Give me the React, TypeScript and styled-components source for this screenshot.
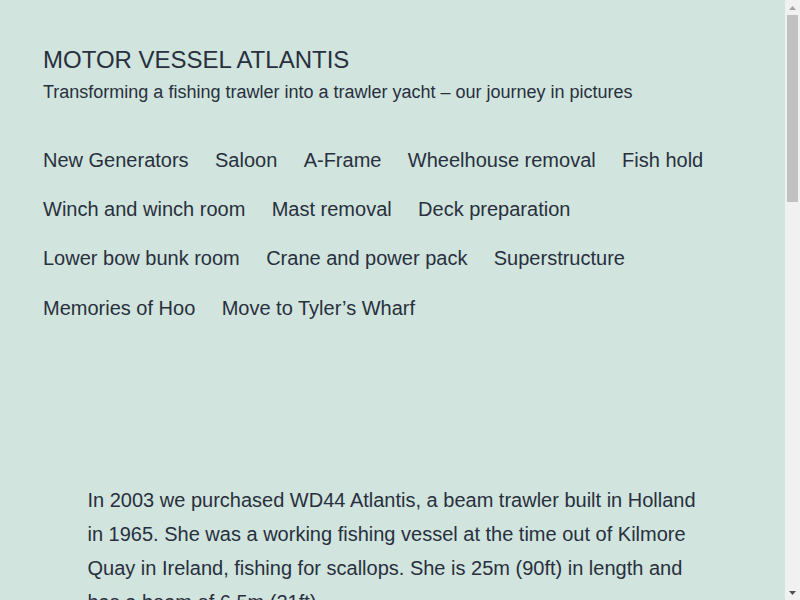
import React from "react";
import styled, { createGlobalStyle } from "styled-components";

const GlobalStyle = createGlobalStyle`
  html, body {
    margin: 0;
    padding: 0;
    background: #d1e4dd;
  }
  body {
    color: #28303d;
    font-family: "Liberation Sans", Arial, sans-serif;
    padding-right: 15px;
  }
`;

const Page = styled.div`
  min-height: 1830px;
  display: flex;
  flex-direction: column;
`;

const Header = styled.header`
  padding: 44px 43px 0 43px;
  display: flex;
  flex-direction: column;
`;

const SiteTitle = styled.h1`
  margin: 0;
  font-size: 24px;
  line-height: 31.2px;
  font-weight: 400;
  text-transform: uppercase;
`;

const Tagline = styled.p`
  margin: 5px 0 0 0;
  font-size: 18px;
  line-height: 25.2px;
`;

const Nav = styled.nav`
  margin-top: 30px;
`;

const MenuList = styled.ul`
  list-style: none;
  margin: 0 0 0 -13.2px;
  padding: 0;
  display: flex;
  flex-wrap: wrap;
  max-width: 700px;
`;

const MenuItem = styled.li`
  display: block;
`;

const MenuLink = styled.a`
  display: block;
  padding: 11.6px 13.2px;
  font-size: 20px;
  line-height: 26px;
  color: #28303d;
  text-decoration: none;
`;

const Break = styled.li`
  flex-basis: 100%;
  height: 0;
`;

const Main = styled.main`
  width: 610px;
  margin: 151px auto 0 auto;
`;

const Para = styled.p`
  margin: 0 0 30px 0;
  font-size: 20px;
  line-height: 34px;
`;

const ScrollTrack = styled.div`
  position: fixed;
  top: 0;
  right: 0;
  width: 15px;
  height: 100vh;
  background: #f1f1f1;
  display: flex;
  flex-direction: column;
  align-items: center;
`;

const ScrollArrow = styled.div<{ $down?: boolean }>`
  width: 15px;
  height: 15px;
  display: flex;
  align-items: center;
  justify-content: center;
  order: ${(p) => (p.$down ? 3 : 0)};
  margin-top: ${(p) => (p.$down ? "auto" : "0")};
`;

const ScrollThumb = styled.div`
  order: 1;
  width: 11px;
  height: 187px;
  background: #c1c1c1;
`;

const menuItems = [
  "New Generators",
  "Saloon",
  "A-Frame",
  "Wheelhouse removal",
  "Fish hold",
  "Winch and winch room",
  "Mast removal",
  "Deck preparation",
  "Lower bow bunk room",
  "Crane and power pack",
  "Superstructure",
  "Memories of Hoo",
  "Move to Tyler\u2019s Wharf",
];

const rowBreaks = new Set([4, 7, 10]);

export default function App() {
  return (
    <>
      <GlobalStyle />
      <Page>
        <Header>
          <SiteTitle>Motor Vessel Atlantis</SiteTitle>
          <Tagline>
            Transforming a fishing trawler into a trawler yacht – our journey in pictures
          </Tagline>
          <Nav>
            <MenuList>
              {menuItems.map((m, i) => (
                <React.Fragment key={m}>
                  <MenuItem>
                    <MenuLink href="#">{m}</MenuLink>
                  </MenuItem>
                  {rowBreaks.has(i) && <Break />}
                </React.Fragment>
              ))}
            </MenuList>
          </Nav>
        </Header>
        <Main>
          <Para>
            In 2003 we purchased WD44 Atlantis, a beam trawler built in Holland in 1965. She
            was a working fishing vessel at the time out of Kilmore Quay in Ireland, fishing for
            scallops. She is 25m (90ft) in length and has a beam of 6.5m (21ft).
          </Para>
          <Para>
            Since then we have been converting her, step by step, from a working trawler into a
            comfortable trawler yacht. The pages above follow each stage of the work, from
            stripping out the fishing gear to building the new superstructure.
          </Para>
          <Para>
            Each page has a short description and a gallery of photographs taken as the work
            progressed. We hope you enjoy following our journey.
          </Para>
        </Main>
      </Page>
      <ScrollTrack aria-hidden="true">
        <ScrollArrow>
          <svg width="7" height="4" viewBox="0 0 7 4">
            <path d="M3.5 0 L7 4 L0 4 Z" fill="#a3a3a3" />
          </svg>
        </ScrollArrow>
        <ScrollThumb />
        <ScrollArrow $down>
          <svg width="7" height="4" viewBox="0 0 7 4">
            <path d="M0 0 L7 0 L3.5 4 Z" fill="#505050" />
          </svg>
        </ScrollArrow>
      </ScrollTrack>
    </>
  );
}
